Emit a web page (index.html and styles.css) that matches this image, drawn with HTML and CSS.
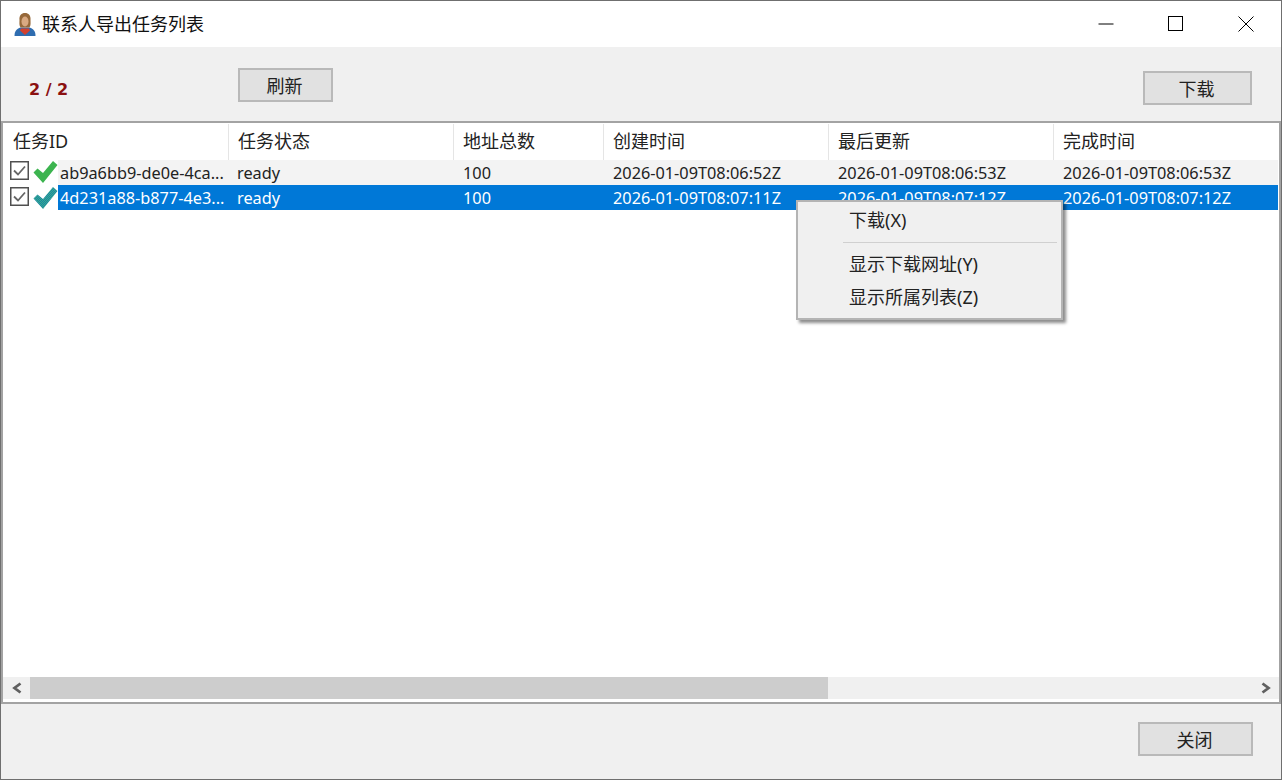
FILE: index.html
```html
<!DOCTYPE html>
<html lang="zh">
<head>
<meta charset="utf-8">
<title>联系人导出任务列表</title>
<link rel="stylesheet" href="styles.css">
</head>
<body>
<svg class="defs" width="0" height="0" aria-hidden="true">
  <defs>
    <pattern id="dither" width="2" height="2" patternUnits="userSpaceOnUse">
      <rect width="2" height="2" fill="#38b08a"/>
      <rect width="1" height="1" fill="#1a7fa8"/>
      <rect x="1" y="1" width="1" height="1" fill="#1a7fa8"/>
    </pattern>
  </defs>
</svg>
<div class="window">
  <header class="titlebar">
    <svg class="app-icon" width="22" height="25" viewBox="0 0 22 25">
      <path d="M0.500 24c0-5 2-7 6-8.500h9c4 1.500 6 3.500 6 8.500z" fill="#2f6db0"/>
      <path d="M7 16.500h8l1 2-5 4.500-5-4.500z" fill="#d2402e"/>
      <path d="M5.500 8c-0.500-4.500 2-7 5.500-7s6 2.500 5.500 7c0 3 0.500 5-1 7.500H6.500c-1.500-2.500-1-4.500-1-7.500z" fill="#96683a"/>
      <ellipse cx="11" cy="9.500" rx="3.500" ry="5" fill="#d9a982"/>
    </svg>
    <span class="title">联系人导出任务列表</span>
    <div class="controls">
      <span class="control">
        <svg width="16" height="16" viewBox="0 0 16 16"><path d="M0.500 8h15" stroke="#000" fill="none"/></svg>
      </span>
      <span class="control">
        <svg width="16" height="16" viewBox="0 0 16 16"><rect x="0.500" y="0.500" width="14" height="14" stroke="#000" fill="none"/></svg>
      </span>
      <span class="control">
        <svg width="16" height="16" viewBox="0 0 16 16"><path d="M0.500 0.500l15 15M15.500 0.500l-15 15" stroke="#000" fill="none"/></svg>
      </span>
    </div>
  </header>

  <section class="toolbar">
    <span class="counter">2 / 2</span>
    <button class="btn btn-refresh">刷新</button>
    <button class="btn btn-download">下载</button>
  </section>

  <main class="listbox">
    <div class="list-head">
      <div class="hcell">任务ID</div>
      <div class="hcell">任务状态</div>
      <div class="hcell">地址总数</div>
      <div class="hcell">创建时间</div>
      <div class="hcell">最后更新</div>
      <div class="hcell">完成时间</div>
    </div>
    <div class="list-body">
      <div class="row">
        <div class="row-icons">
          <svg class="check-box" width="19" height="19" viewBox="0 0 19 19"><rect x="0.750" y="0.750" width="17.500" height="17.500" fill="#fff" stroke="#505050" stroke-width="1.500"/><path d="M4 9.500l4 4 7-8" fill="none" stroke="#666" stroke-width="1.800"/></svg>
          <svg class="status" width="25" height="24" viewBox="0 0 25 24"><path d="M0.500 12.500L4.500 8.500 10 13 20 1l4.500 4L10 23z" fill="#3cb44f"/></svg>
        </div>
        <div class="cells cells-plain">
          <div class="cell cell-id">ab9a6bb9-de0e-4ca...</div>
          <div class="cell cell-status">ready</div>
          <div class="cell">100</div>
          <div class="cell">2026-01-09T08:06:52Z</div>
          <div class="cell">2026-01-09T08:06:53Z</div>
          <div class="cell">2026-01-09T08:06:53Z</div>
        </div>
      </div>
      <div class="row">
        <div class="row-icons row-icons-lower">
          <svg class="check-box" width="19" height="19" viewBox="0 0 19 19"><rect x="0.750" y="0.750" width="17.500" height="17.500" fill="#fff" stroke="#505050" stroke-width="1.500"/><path d="M4 9.500l4 4 7-8" fill="none" stroke="#666" stroke-width="1.800"/></svg>
          <svg class="status" width="25" height="24" viewBox="0 0 25 24"><path d="M0.500 12.500L4.500 8.500 10 13 20 1l4.500 4L10 23z" fill="url(#dither)"/></svg>
        </div>
        <div class="cells cells-selected">
          <div class="cell cell-id">4d231a88-b877-4e3...</div>
          <div class="cell cell-status">ready</div>
          <div class="cell">100</div>
          <div class="cell">2026-01-09T08:07:11Z</div>
          <div class="cell">2026-01-09T08:07:12Z</div>
          <div class="cell">2026-01-09T08:07:12Z</div>
        </div>
      </div>
    </div>
    <div class="hscroll">
      <span class="arrow">
        <svg width="12" height="12" viewBox="0 0 12 12"><path d="M9.500 1.500L3.500 6l6 4.500" fill="none" stroke="#606060" stroke-width="2.800"/></svg>
      </span>
      <div class="track"><div class="thumb"></div></div>
      <span class="arrow">
        <svg width="12" height="12" viewBox="0 0 12 12"><path d="M2.500 1.500L8.500 6l-6 4.500" fill="none" stroke="#606060" stroke-width="2.800"/></svg>
      </span>
    </div>
  </main>

  <footer class="footer">
    <button class="btn btn-close">关闭</button>
  </footer>

  <nav class="menu">
    <div class="menu-item">下载(X)</div>
    <div class="menu-sep"></div>
    <div class="menu-item">显示下载网址(Y)</div>
    <div class="menu-item">显示所属列表(Z)</div>
  </nav>
</div>
</body>
</html>
```

FILE: styles.css
```css
* { box-sizing: border-box; }
html, body { margin: 0; padding: 0; background: #fff; }
body {
  font-family: "Noto Sans", "Noto Sans CJK SC", sans-serif;
  color: #222;
  overflow: hidden;
}
.defs { position: absolute; }
.window {
  position: relative;
  width: 1282px;
  height: 780px;
  border: 1px solid #6f6f6f;
  display: flex;
  flex-direction: column;
}
.titlebar {
  height: 46px;
  background: #fff;
  display: flex;
  align-items: center;
  flex: none;
}
.app-icon { margin-left: 13px; margin-right: 6px; }
.title { font-size: 18px; color: #111; margin-bottom: 3px; }
.controls { margin-left: auto; display: flex; }
.control {
  width: 70px;
  height: 46px;
  display: flex;
  align-items: center;
  justify-content: center;
}
.toolbar {
  height: 74px;
  flex: none;
  background: #f0f0f0;
  display: flex;
  align-items: flex-start;
}
.counter {
  margin: 31px 0 0 28px;
  width: 209px;
  font-family: "DejaVu Sans", sans-serif;
  font-weight: 700;
  font-size: 16px;
  line-height: 24px;
  color: #8b1010;
}
.btn {
  font: inherit;
  font-size: 18px;
  color: #222;
  background: #e1e1e1;
  border: 2px solid #b9b9b9;
  padding: 0 2px 0 0;
  height: 34px;
}
.btn-refresh { width: 95px; margin-top: 21px; }
.btn-download { width: 109px; margin: 24px 29px 0 auto; }
.listbox {
  height: 583px;
  flex: none;
  margin: 0;
  border: 2px solid #a3a3a3;
  background: #fff;
  display: flex;
  flex-direction: column;
}
.list-head {
  display: grid;
  grid-template-columns: 226px 225px 150px 225px 225px 225px;
  padding-top: 1px;
  height: 37px;
  flex: none;
  font-size: 18px;
}
.hcell {
  height: 36px;
  line-height: 34px;
  padding-left: 9px;
  border-right: 1px solid #e5e5e5;
  white-space: nowrap;
  overflow: hidden;
}
.hcell:first-child { padding-left: 10px; }
.hcell:last-child { border-right: 0; }
.list-body { flex: 1; min-height: 0; overflow: hidden; }
.row { display: flex; height: 25px; }
.row-icons {
  width: 55px;
  flex: none;
  display: flex;
  align-items: flex-start;
}
.row-icons-lower { padding-top: 1px; }
.check-box { margin: 1px 0 0 7px; flex: none; }
.status { margin-left: 4px; flex: none; }
.cells {
  display: grid;
  grid-template-columns: 170px 225px 150px 225px 225px 225px;
  grid-template-rows: 25px;
  flex: none;
  font-size: 16.300px;
  line-height: 25px;
}
.cells-plain { background: #f3f3f3; color: #222; }
.cells-selected { background: #0078d7; color: #fff; }
.cell { padding: 1px 0 0 10px; white-space: nowrap; overflow: hidden; }
.cell-id { padding-left: 2px; }
.cell-status { padding-left: 9px; }
.hscroll {
  height: 22px;
  flex: none;
  margin-bottom: 3px;
  background: #f0f0f0;
  display: flex;
}
.arrow {
  width: 27px;
  flex: none;
  display: flex;
  align-items: center;
  justify-content: center;
}
.track { flex: 1; }
.thumb { width: 798px; height: 100%; background: #cdcdcd; }
.footer {
  flex: 1;
  background: #f0f0f0;
  display: flex;
  justify-content: flex-end;
  align-items: flex-start;
}
.btn-close { width: 115px; margin: 18px 28px 0 0; }
.menu {
  position: absolute;
  left: 795px;
  top: 199px;
  width: 267px;
  height: 120px;
  background: #f0f0f0;
  border: 2px solid #b4b4b4;
  box-shadow: 3px 3px 3px rgba(0, 0, 0, 0.45);
  padding: 2px 4px 0 45px;
  font-size: 18px;
  color: #222;
}
.menu-item { height: 33px; line-height: 33px; padding-left: 6px; white-space: nowrap; }
.menu-sep { height: 1px; background: #d0d0d0; margin: 5px 0 5px; }
```
